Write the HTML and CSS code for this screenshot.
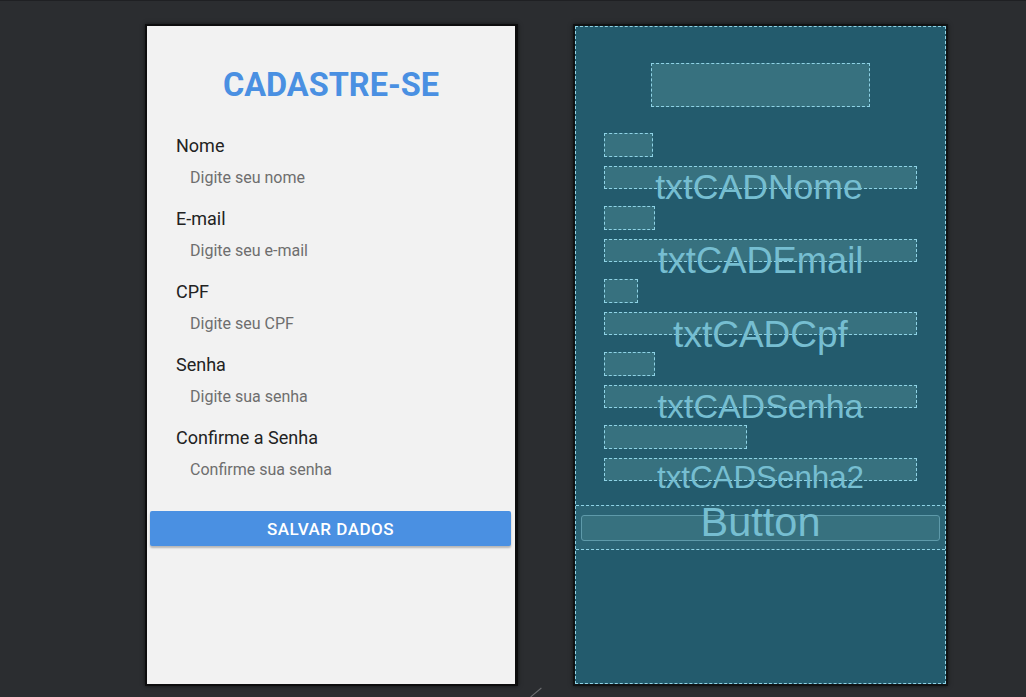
FILE: index.html
```html
<!DOCTYPE html>
<html lang="pt">
<head>
<meta charset="utf-8">
<title>Cadastre-se</title>
<link rel="stylesheet" href="styles.css">
</head>
<body>
<div class="stage">
  <div class="phone">
    <div class="screen">
      <h1 class="title">CADASTRE-SE</h1>
      <div class="fields">
        <div class="field"><div class="label">Nome</div><div class="hint">Digite seu nome</div></div>
        <div class="field"><div class="label">E-mail</div><div class="hint">Digite seu e-mail</div></div>
        <div class="field"><div class="label">CPF</div><div class="hint">Digite seu CPF</div></div>
        <div class="field"><div class="label">Senha</div><div class="hint">Digite sua senha</div></div>
        <div class="field"><div class="label">Confirme a Senha</div><div class="hint">Confirme sua senha</div></div>
      </div>
      <button class="save">SALVAR DADOS</button>
    </div>
  </div>
  <div class="blueprint">
    <div class="bp-inner">
      <div class="bp-title"></div>
      <div class="bp-fields">
        <div class="bp-field"><div class="bp-label w-nome"></div><div class="bp-input"><span class="bp-text t-nome">txtCADNome</span></div></div>
        <div class="bp-field"><div class="bp-label w-email"></div><div class="bp-input"><span class="bp-text t-email">txtCADEmail</span></div></div>
        <div class="bp-field"><div class="bp-label w-cpf"></div><div class="bp-input"><span class="bp-text t-cpf">txtCADCpf</span></div></div>
        <div class="bp-field"><div class="bp-label w-senha"></div><div class="bp-input"><span class="bp-text t-senha">txtCADSenha</span></div></div>
        <div class="bp-field"><div class="bp-label w-senha2"></div><div class="bp-input"><span class="bp-text t-senha2">txtCADSenha2</span></div></div>
      </div>
      <div class="bp-band"><div class="bp-button"><span class="bp-btn-text">Button</span></div></div>
    </div>
  </div>
</div>
<div class="resize-handle"></div>
</body>
</html>
```
FILE: styles.css
```css
html, body {
  margin: 0;
  padding: 0;
}
body {
  background: #2b2d30;
  border-top: 1px solid #1f2023;
  height: 697px;
  box-sizing: border-box;
  overflow: hidden;
  font-family: Roboto, "Noto Sans", sans-serif;
  position: relative;
}
.stage {
  display: flex;
  align-items: flex-start;
  gap: 55px;
  padding: 23px 0 0 145px;
}

/* ---------- Phone preview ---------- */
.phone {
  width: 368px;
  height: 658px;
  border: 2px solid #0d0d0e;
  border-right-width: 3px;
  background: #f2f2f2;
  box-shadow: 0 0 4px rgba(0, 0, 0, 0.6);
}
.screen {
  display: flex;
  flex-direction: column;
  padding-top: 43px;
}
.title {
  margin: 0;
  font: 700 32.5px/32px Roboto, sans-serif;
  color: #4a90e2;
  text-align: center;
}
.fields {
  margin-top: 35px;
  padding-left: 29px;
  display: flex;
  flex-direction: column;
  gap: 21px;
}
.field {
  display: flex;
  flex-direction: column;
}
.label {
  font-size: 18px;
  line-height: 20px;
  color: #222222;
}
.hint {
  margin-top: 11px;
  padding-left: 14px;
  font-size: 16px;
  line-height: 21px;
  color: #6e6e6e;
}
.save {
  margin: 31px 4px 0 3px;
  height: 35px;
  border: none;
  border-radius: 2px;
  background: #4a90e2;
  color: #ffffff;
  font: 500 17px Roboto, sans-serif;
  letter-spacing: 0.5px;
  box-shadow: 0 2px 2px rgba(0, 0, 0, 0.25);
  padding: 0;
}

/* ---------- Blueprint ---------- */
.blueprint {
  width: 371px;
  height: 658px;
  border: 2px solid #111213;
  background: #235b6d;
  box-shadow: 0 0 4px rgba(0, 0, 0, 0.6);
}
.bp-inner {
  height: 100%;
  box-sizing: border-box;
  border: 1px dashed #8fd3e6;
  display: flex;
  flex-direction: column;
  padding-top: 36px;
}
.bp-title {
  align-self: center;
  width: 219px;
  height: 44px;
  box-sizing: border-box;
  border: 1px dashed #8fd3e6;
  background: #37717f;
}
.bp-fields {
  margin-top: 26px;
  padding-left: 28px;
  display: flex;
  flex-direction: column;
  gap: 17px;
}
.bp-field {
  display: flex;
  flex-direction: column;
}
.bp-label,
.bp-input {
  box-sizing: border-box;
  border: 1px dashed #8fd3e6;
  background: #37717f;
}
.bp-label {
  height: 24px;
}
.w-nome { width: 49px; }
.w-email { width: 51px; }
.w-cpf { width: 34px; }
.w-senha { width: 51px; }
.w-senha2 { width: 143px; }
.bp-input {
  margin-top: 9px;
  width: 313px;
  height: 23px;
  position: relative;
}
.bp-text {
  position: absolute;
  left: -20px;
  right: -20px;
  top: 3px;
  text-align: center;
  white-space: nowrap;
  font-family: "Liberation Sans", Arial, sans-serif;
  line-height: 1;
  color: #76bed1;
}
.t-nome { font-size: 35.6px; left: -23px; }
.t-email { font-size: 36.3px; }
.t-cpf { font-size: 37px; }
.t-senha { font-size: 34px; }
.t-senha2 { font-size: 31.3px; }
.bp-band {
  margin-top: 24px;
  height: 45px;
  box-sizing: border-box;
  border-top: 1px dashed #8fd3e6;
  border-bottom: 1px dashed #8fd3e6;
  background: #2b6475;
  padding: 9px 5px 8px;
}
.bp-button {
  height: 26px;
  box-sizing: border-box;
  border: 1px solid #5e9aaa;
  border-radius: 3px;
  background: #37717f;
  position: relative;
}
.bp-btn-text {
  position: absolute;
  left: 0;
  right: 0;
  top: -15px;
  text-align: center;
  font-family: "Liberation Sans", Arial, sans-serif;
  font-size: 41.5px;
  line-height: 1;
  color: #76bed1;
}

.resize-handle {
  position: absolute;
  left: 529px;
  top: 691px;
  width: 14px;
  height: 1px;
  background: #6c6d70;
  transform: rotate(-40deg);
}
```
